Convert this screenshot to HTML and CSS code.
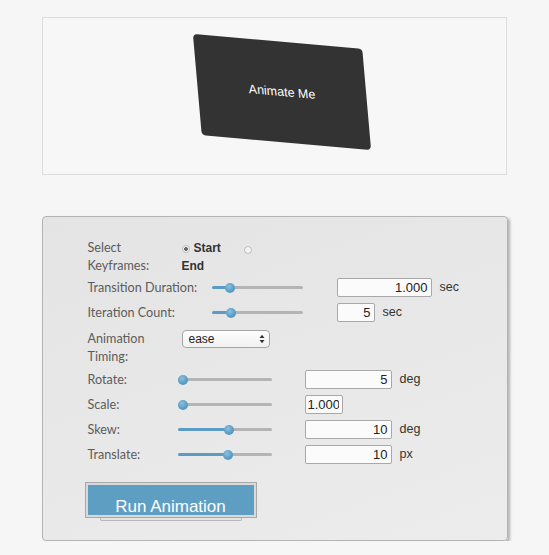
FILE: index.html
```html
<!DOCTYPE html>
<html>
<head>
<meta charset="utf-8">
<link rel="stylesheet" href="styles.css">
</head>
<body>
<div class="page">
  <div class="stage">
    <div class="card">Animate Me</div>
  </div>

  <div class="panel">
    <div class="row row-keyframes">
      <div class="label">Select Keyframes:</div>
      <div class="radios">
        <label class="radio-opt"><input type="radio" name="kf" checked><b>Start</b></label>
        <label class="radio-opt"><input type="radio" name="kf"><b>End</b></label>
      </div>
    </div>

    <div class="row row-timing-top">
      <div class="label nowrap">Transition Duration:</div>
      <input type="range" class="slider slider-wide" style="--p:17%" value="17">
      <input type="text" class="num num-wide" value="1.000">
      <span class="unit">sec</span>
    </div>
    <div class="row row-timing-top">
      <div class="label nowrap">Iteration Count:</div>
      <input type="range" class="slider slider-wide" style="--p:18%" value="18">
      <input type="text" class="num num-short" value="5">
      <span class="unit">sec</span>
    </div>

    <div class="row row-select">
      <div class="label">Animation Timing:</div>
      <div class="select">
        <span>ease</span>
        <svg width="6" height="10" viewBox="0 0 6 10"><path d="M0.5 4L3 0.8L5.5 4Z M0.5 6L3 9.2L5.5 6Z" fill="#333"/></svg>
      </div>
    </div>

    <div class="row row-tr">
      <div class="label">Rotate:</div>
      <input type="range" class="slider slider-tr" style="--p:0%" value="0">
      <input type="text" class="num num-tr" value="5">
      <span class="unit">deg</span>
    </div>
    <div class="row row-tr">
      <div class="label">Scale:</div>
      <input type="range" class="slider slider-tr" style="--p:0%" value="0">
      <input type="text" class="num num-scale" value="1.000">
    </div>
    <div class="row row-tr">
      <div class="label">Skew:</div>
      <input type="range" class="slider slider-tr" style="--p:55%" value="55">
      <input type="text" class="num num-tr" value="10">
      <span class="unit">deg</span>
    </div>
    <div class="row row-tr">
      <div class="label">Translate:</div>
      <input type="range" class="slider slider-tr" style="--p:54%" value="54">
      <input type="text" class="num num-tr" value="10">
      <span class="unit">px</span>
    </div>

    <div class="btn-wrap">
      <button class="run">Run Animation</button>
    </div>
  </div>
</div>
</body>
</html>
```

FILE: styles.css
```css
html, body {
  margin: 0;
  padding: 0;
  background: #f6f6f6;
}

.page {
  width: 466px;
  margin: 0 auto;
  padding-top: 17px;
  font-family: "Liberation Sans", Arial, sans-serif;
}

.stage {
  width: 463px;
  height: 156px;
  border: 1px solid #dcdcdc;
  background: #f7f7f7;
  display: flex;
  justify-content: center;
  align-items: flex-start;
}

.card {
  margin-top: 24px;
  width: 170px;
  height: 100px;
  background: #333333;
  border-radius: 4px;
  color: #ffffff;
  font-size: 12.5px;
  display: flex;
  align-items: center;
  justify-content: center;
  transform: translate(8px, 0) rotate(5deg) skewX(10deg);
}

.panel {
  margin-top: 41px;
  width: 466px;
  border: 1px solid #b4b4b4;
  border-radius: 4px;
  background: linear-gradient(160deg, #e4e4e4 0%, #ececec 100%);
  box-shadow: 2px 2px 3px rgba(0, 0, 0, 0.28);
  padding: 21px 0 20px 45px;
  box-sizing: border-box;
}

.row {
  display: flex;
  align-items: center;
  color: #555;
  font-family: "Lato", "Liberation Sans", sans-serif;
  font-size: 12.6px;
}

.label {
  line-height: 17.5px;
  color: #5c5c5c;
}

.nowrap { white-space: nowrap; }

/* keyframes */
.row-keyframes {
  align-items: flex-start;
  padding-top: 1px;
}
.row-keyframes .label {
  width: 94px;
}
.radios {
  width: 80px;
  display: flex;
  flex-wrap: wrap;
  font-family: "Liberation Sans", Arial, sans-serif;
  font-size: 12px;
  color: #333;
  line-height: 17.5px;
  padding-top: 1px;
}
.radio-opt {
  display: flex;
  align-items: center;
  margin-right: 22px;
}
.radio-opt b { color: #333; }
.radio-opt input {
  appearance: none;
  -webkit-appearance: none;
  width: 8px;
  height: 8px;
  margin: 0 4px 0 0;
  border: 1px solid #bdbdbd;
  border-radius: 50%;
  background: #f4f4f4;
  box-sizing: border-box;
}
.radio-opt input:checked {
  background: radial-gradient(circle, #6a6a6a 0, #6a6a6a 1.6px, #f4f4f4 2.2px);
}
.radio-opt:nth-child(2) {
  width: 60px;
  position: relative;
}
.radio-opt:nth-child(2) input {
  position: absolute;
  left: 62px;
  top: -12px;
}

/* sliders */
.slider {
  -webkit-appearance: none;
  appearance: none;
  height: 11px;
  margin: 0;
  padding: 0;
  background: transparent;
}
.slider::-webkit-slider-runnable-track {
  height: 3px;
  border-radius: 2px;
  background: linear-gradient(to right, #5a9cc5 0, #5a9cc5 var(--p), #b4b4b4 var(--p), #b4b4b4 100%);
}
.slider::-webkit-slider-thumb {
  -webkit-appearance: none;
  appearance: none;
  width: 10px;
  height: 10px;
  margin-top: -3.5px;
  border-radius: 50%;
  background: radial-gradient(circle at 40% 35%, #8ec0de 0, #5a9dc7 55%, #4b8cb6 100%);
  border: none;
}

.row-timing-top {
  height: 25px;
}
.row-timing-top .label {
  width: 124px;
}
.slider-wide {
  width: 91px;
  margin-right: 34px;
}

.num {
  height: 19px;
  box-sizing: border-box;
  border: 1px solid #a9a9a9;
  border-radius: 2px;
  background: #fbfbfb;
  font-family: "Liberation Sans", Arial, sans-serif;
  font-size: 13px;
  color: #222;
  text-align: right;
  padding: 0 3px 0 2px;
  margin: 0;
  outline: none;
}
.num-wide { width: 95px; }
.num-short { width: 38px; }
.num-tr { width: 87px; }
.num-scale { width: 38px; text-align: left; }

.unit {
  margin-left: 8px;
  font-family: "Liberation Sans", Arial, sans-serif;
  font-size: 12.5px;
  color: #333;
  margin-top: -2px;
}

/* select */
.row-select {
  align-items: flex-start;
  padding-top: 5px;
  height: 37px;
}
.row-select .label {
  width: 94px;
  margin-top: 0px;
}
.select {
  width: 88px;
  height: 18px;
  box-sizing: border-box;
  border: 1px solid #a5a5a5;
  border-radius: 4px;
  background: linear-gradient(#fdfdfd, #f1f1f1);
  display: flex;
  align-items: center;
  justify-content: space-between;
  padding: 0 4px 0 6px;
  font-family: "Liberation Sans", Arial, sans-serif;
  font-size: 12px;
  color: #222;
}

/* transform rows */
.row-tr {
  height: 25px;
}
.row-tr .label {
  width: 90px;
}
.slider-tr {
  width: 94px;
  margin-right: 33px;
}

/* button */
.btn-wrap {
  margin-top: 15px;
  margin-left: -3px;
  padding-bottom: 2px;
}
.run {
  position: relative;
  width: 172px;
  height: 36px;
  margin: 0;
  padding: 14px 0 0 0;
  border: 1px solid #a8a8a8;
  box-shadow: inset 0 0 0 2px #d9d9d9;
  background: #5f9ec3;
  color: #fff;
  font-family: "Liberation Sans", Arial, sans-serif;
  font-size: 17px;
  line-height: 20px;
  cursor: pointer;
  outline: none;
}
.run::after {
  content: "";
  position: absolute;
  left: 14px;
  right: 14px;
  bottom: -4px;
  height: 2px;
  background: #e4e4e4;
  border: 1px solid #b8b8b8;
  border-top: none;
  border-radius: 0 0 2px 2px;
}
```
